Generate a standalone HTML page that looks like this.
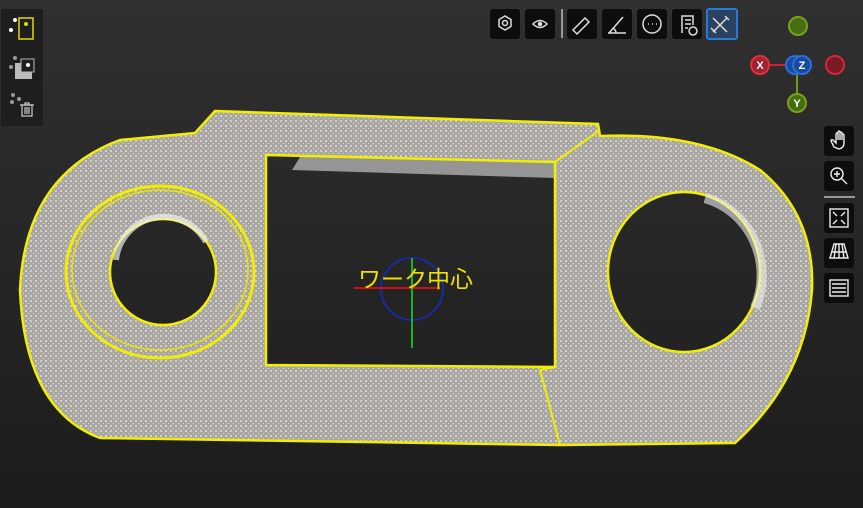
<!DOCTYPE html>
<html><head><meta charset="utf-8"><style>
body{margin:0;width:863px;height:508px;overflow:hidden;background:linear-gradient(#303030,#1c1c1c);font-family:"Liberation Sans","Noto Sans CJK JP",sans-serif}
.b{position:absolute;width:30px;height:30px;background:#0d0d0d;border-radius:3px}
</style></head><body>
<svg width="863" height="508" style="position:absolute;left:0;top:0">
<defs><pattern id="n" width="5" height="5" patternUnits="userSpaceOnUse"><rect width="5" height="5" fill="#a9a5a0"/><circle cx="1" cy="1" r=".9" fill="#f0f0f0"/><circle cx="3.5" cy="3.5" r=".6" fill="#d8d8d8"/></pattern></defs>
<path d="M266,155 L300,157 L292,170 L555,178 L555,162 Z" fill="#ddd" opacity=".6"/>
<path fill-rule="evenodd" fill="url(#n)" stroke="#f2ee00" stroke-width="2.5" d="M215,111 L598,124 L600,136 Q700,132 760,170 Q815,215 812,290 Q805,380 735,443 L560,445 L100,438 Q25,410 20,290 Q25,175 120,140 L195,133 Z
M266,155 L555,162 L555,367 L266,365 Z
M110,272 a53,53 0 1,0 106,0 a53,53 0 1,0 -106,0 Z
M608,272 a76,80 0 1,0 152,0 a76,80 0 1,0 -152,0 Z"/>
<path d="M116,260 a48,48 0 0,1 90,-18" stroke="#eee" stroke-width="6" fill="none" opacity=".7"/>
<path d="M705,198 a76,80 0 0,1 50,110" stroke="#eee" stroke-width="10" fill="none" opacity=".6"/>
<ellipse cx="160" cy="272" rx="94" ry="86" fill="none" stroke="#f2ee00" stroke-width="3"/>
<ellipse cx="160" cy="270" rx="88" ry="80" fill="none" stroke="#e8e400" stroke-width="1.5"/>
<path d="M555,162 L600,130 M555,367 L540,370 L560,445" stroke="#f2ee00" stroke-width="2" fill="none"/>
<circle cx="412" cy="289" r="31" fill="none" stroke="#1a2aa0" stroke-width="2"/>
<path d="M354,288 H440" stroke="#d01010" stroke-width="2"/>
<path d="M412,258 V348" stroke="#20b020" stroke-width="2"/>
<text x="358" y="287" fill="#f0e000" font-size="23" font-family="Noto Sans CJK JP">ワーク中心</text>
<line x1="562" y1="9" x2="562" y2="38" stroke="#999" stroke-width="2"/>
<line x1="760" y1="65" x2="797" y2="65" stroke="#d02030" stroke-width="2"/>
<line x1="797" y1="65" x2="797" y2="103" stroke="#6a9a20" stroke-width="2"/>
<circle cx="798" cy="26" r="9" fill="#456e10" stroke="#7aa020" stroke-width="2"/>
<circle cx="835" cy="65" r="9" fill="#7a1a25" stroke="#d02a3a" stroke-width="2"/>
<circle cx="760" cy="65" r="9" fill="#a02030" stroke="#e03040" stroke-width="2"/>
<circle cx="795" cy="65" r="9" fill="#1a4aa0" stroke="#2a70d8" stroke-width="2"/>
<circle cx="802" cy="65" r="9" fill="#1a4aa0" stroke="#2a70d8" stroke-width="2"/>
<circle cx="797" cy="103" r="9" fill="#456e10" stroke="#7aa020" stroke-width="2"/>
<g fill="#fff" font-size="11" font-weight="bold" text-anchor="middle"><text x="760" y="69">X</text><text x="802" y="69">Z</text><text x="797" y="107">Y</text></g>
<rect x="1" y="9" width="42" height="117" fill="#1e1e1e"/>
<rect x="19" y="18" width="14" height="21" fill="none" stroke="#e8d800" stroke-width="1.5"/>
<circle cx="26" cy="24" r="2" fill="#e8d800"/><circle cx="15" cy="20" r="2" fill="#fff"/><circle cx="11" cy="30" r="2" fill="#fff"/>
<rect x="15" y="63" width="17" height="16" fill="#bbb"/><rect x="21" y="59" width="13" height="13" fill="#1e1e1e" stroke="#bbb"/><circle cx="28" cy="65" r="2" fill="#fff"/>
<circle cx="15" cy="58" r="2" fill="#999"/><circle cx="11" cy="67" r="2" fill="#999"/>
<circle cx="13" cy="95" r="2" fill="#999"/><circle cx="19" cy="99" r="2" fill="#999"/><circle cx="12" cy="102" r="2" fill="#999"/>
<g stroke="#ccc" stroke-width="1.2" fill="none"><rect x="22" y="105" width="10" height="11"/><line x1="20" y1="105" x2="34" y2="105"/><rect x="25" y="103" width="4" height="2"/><path d="M25,107v7M27,107v7M29,107v7"/></g>
<line x1="824" y1="197" x2="855" y2="197" stroke="#999" stroke-width="2"/>
</svg>
<div class="b" style="left:490px;top:9px"></div><div class="b" style="left:525px;top:9px"></div>
<div class="b" style="left:567px;top:9px"></div><div class="b" style="left:602px;top:9px"></div>
<div class="b" style="left:637px;top:9px"></div><div class="b" style="left:672px;top:9px"></div>
<div class="b" style="left:706px;top:8px;background:#2b4160;border:2px solid #2a7ad8;width:28px;height:28px"></div>
<svg width="863" height="508" style="position:absolute;left:0;top:0" fill="none" stroke="#ddd" stroke-width="1.5">
<path d="M505,16 l6,3.5 v7 l-6,3.5 l-6,-3.5 v-7 z"/><circle cx="505" cy="23" r="2.5"/>
<path d="M533,24 q7,-7 14,0 q-7,7 -14,0z"/><circle cx="540" cy="24" r="1.5" fill="#ddd"/>
<path d="M573,30 l12,-12 l4,4 l-12,12 z"/>
<path d="M608,33 h18 M609,33 l14,-16 M613,28 q3,2 3,5"/>
<circle cx="652" cy="24" r="9"/><path d="M648,24h1M652,24h1M656,24h1"/>
<path d="M682,33 v-17 h11 v9 M685,20h6M685,24h6M685,28h3"/><circle cx="693" cy="31" r="4"/>
<path d="M713,18 l14,14 M727,18 l-14,14 M711,28 l5,5 M725,16 l4,4"/>
</svg>
<div class="b" style="left:824px;top:126px"></div><div class="b" style="left:824px;top:161px"></div>
<div class="b" style="left:824px;top:203px"></div><div class="b" style="left:824px;top:238px"></div><div class="b" style="left:824px;top:273px"></div>
<svg width="863" height="508" style="position:absolute;left:0;top:0" fill="none" stroke="#eee" stroke-width="1.4">
<path d="M834,147 l-3,-6 q0,-2 2,-1 l3,3 v-9 q1,-2 2,0 v6 v-8 q1,-2 2,0 v8 v-7 q1,-2 2,0 v7 v-5 q1,-2 2,0 v8 q0,5 -5,6 z"/>
<circle cx="837" cy="174" r="6"/><path d="M841,178 l6,6 M834,174h6M837,171v6"/>
<rect x="830" y="209" width="18" height="18"/><path d="M833,212l4,4M845,212l-4,4M833,224l4,-4M845,224l-4,-4"/>
<path d="M834,244 h10 l4,14 h-18 z M831,252h16M839,244v14M836,244l-2,14M842,244l2,14"/>
<rect x="830" y="280" width="18" height="16"/><path d="M832,284h14M832,288h14M832,292h14"/>
</svg>
</body></html>
